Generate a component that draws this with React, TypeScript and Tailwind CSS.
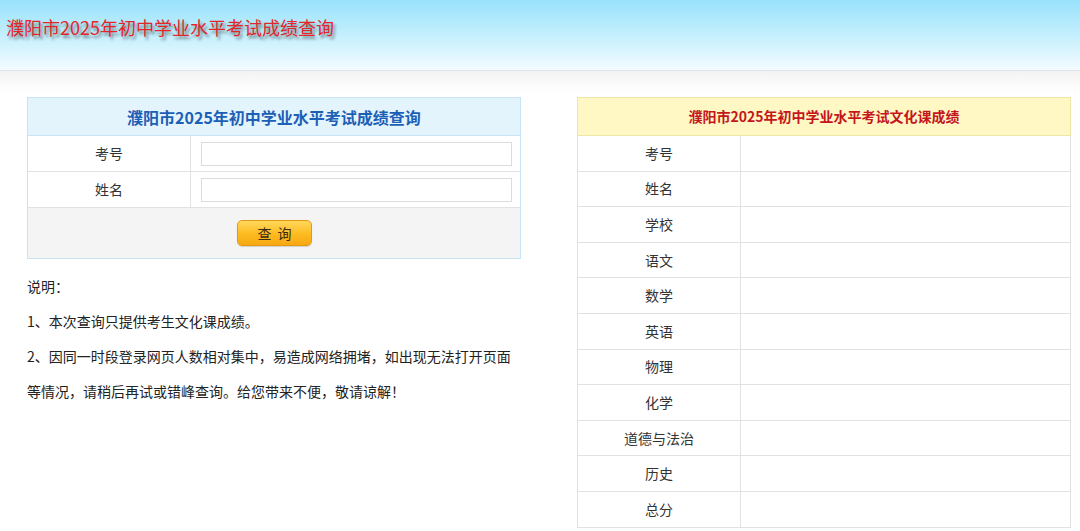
import React from 'react';

const font = { fontFamily: '"Noto Sans CJK SC", "Noto Sans", sans-serif' };

const ScoreQueryPage = () => {
  const subjects = ['考号', '姓名', '学校', '语文', '数学', '英语', '物理', '化学', '道德与法治', '历史', '总分'];

  return (
    <div className="min-h-[531px] bg-white text-[#333]" style={font}>
      <div className="h-[71px] border-b border-[#dfe3ea] bg-gradient-to-b from-[#98e2fc] via-[#c4effd] to-[#f3fbff] px-[6px] pt-[9px]">
        <h1 className="text-[18px] leading-[36px] text-[#e3262a] [text-shadow:2px_3px_3px_rgba(0,0,0,0.45)]">
          濮阳市2025年初中学业水平考试成绩查询
        </h1>
      </div>
      <div className="bg-gradient-to-b from-[#f2f3f2] to-white to-[22px] pt-[26px] pl-[27px]">
        <div className="flex gap-[56px]">
          <div className="w-[494px]">
            <div className="border border-[#c6e4f6]">
              <div className="h-[38px] flex items-center justify-center bg-[#e4f4fd] border-b border-[#c6e4f6] text-[16px] font-bold text-[#1c5fb7]">
                濮阳市2025年初中学业水平考试成绩查询
              </div>
              {['考号', '姓名'].map((label) => (
                <div key={label} className="flex h-[36px] border-b border-[#e2e2e2] bg-white">
                  <div className="w-[163px] border-r border-[#e2e2e2] flex items-center justify-center text-[14px]">{label}</div>
                  <div className="flex-1 flex items-center pl-[10px] pr-[8px]">
                    <input className="w-full h-[24px] border border-[#dcdcdc] bg-white outline-none" />
                  </div>
                </div>
              ))}
              <div className="h-[50px] bg-[#f4f4f4] flex items-center pl-[209px]">
                <button className="w-[75px] h-[26px] rounded-[5px] border border-[#e29a12] bg-gradient-to-b from-[#ffd85a] via-[#fdbd22] to-[#f8a812] text-[14px] text-[#3a2a10] tracking-[6px] pl-[6px] shadow-[0_1px_1px_rgba(0,0,0,0.15)]">
                  查询
                </button>
              </div>
            </div>
            <div className="pt-[10px] text-[14px] leading-[35px] text-[#222]">
              <p>说明：</p>
              <p>1、本次查询只提供考生文化课成绩。</p>
              <p>2、因同一时段登录网页人数相对集中，易造成网络拥堵，如出现无法打开页面等情况，请稍后再试或错峰查询。给您带来不便，敬请谅解！</p>
            </div>
          </div>
          <div className="w-[494px]">
            <div className="border border-[#ece7a8] border-b-0">
              <div className="h-[38px] flex items-center justify-center bg-[#fff8c4] border-b border-[#ece7a8] text-[14px] font-bold text-[#c4161c]">
                濮阳市2025年初中学业水平考试文化课成绩
              </div>
            </div>
            <div className="border-x border-[#e2e2e2]">
              {subjects.map((s) => (
                <div key={s} className="flex h-[35.6px] border-b border-[#e2e2e2]">
                  <div className="w-[163px] border-r border-[#e2e2e2] flex items-center justify-center text-[14px]">{s}</div>
                  <div className="flex-1" />
                </div>
              ))}
            </div>
          </div>
        </div>
      </div>
    </div>
  );
};

export default ScoreQueryPage;
